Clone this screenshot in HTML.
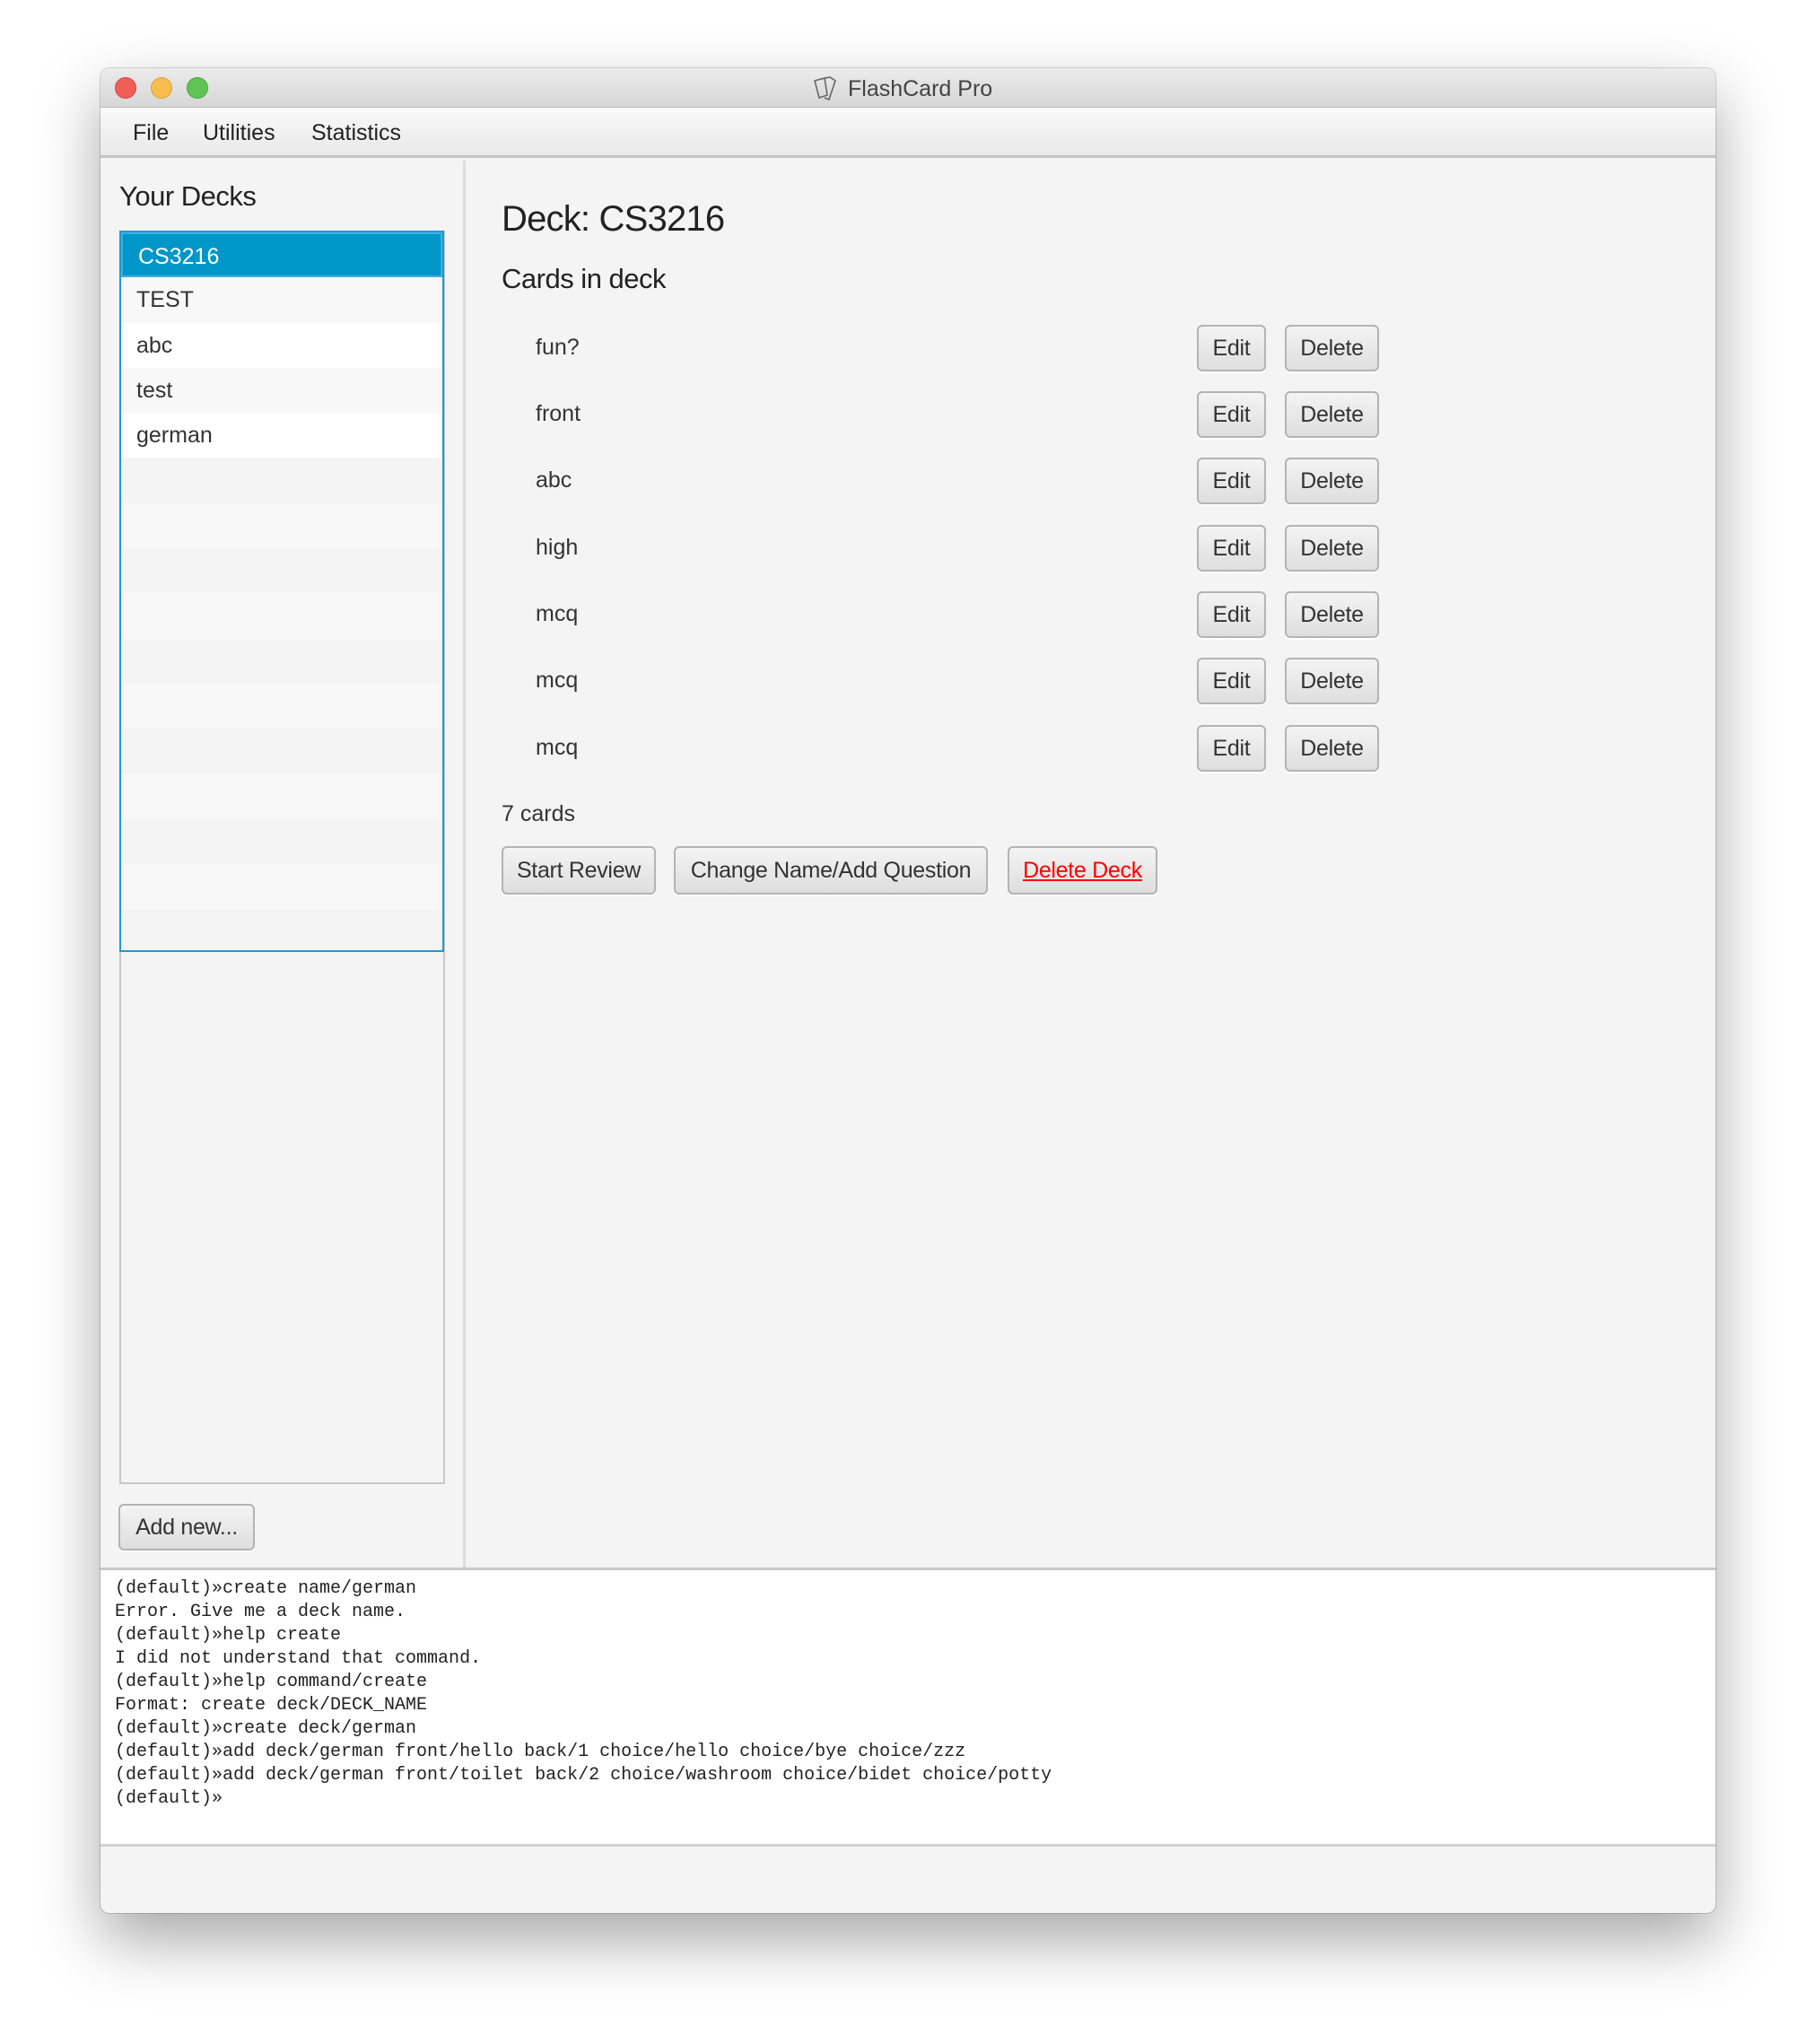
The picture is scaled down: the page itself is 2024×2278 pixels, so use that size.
<!DOCTYPE html>
<html><head><meta charset="utf-8"><style>
*{box-sizing:border-box;margin:0;padding:0}
body{width:2024px;height:2278px;background:#fff;position:relative;overflow:hidden;font-family:"Liberation Sans",sans-serif;color:#333}
.a{position:absolute}
.win{left:112px;top:76px;width:1800px;height:2056px;background:#f4f4f4;border-radius:10px;box-shadow:0 30px 70px rgba(0,0,0,.35),0 0 0 1px rgba(0,0,0,.15);overflow:hidden}
.title{left:0;top:0;width:100%;height:44px;background:linear-gradient(#ececec,#d6d6d6);border-bottom:1px solid #b8b8b8}
.dot{width:24px;height:24px;border-radius:50%;top:10px}
.menu{left:0;top:44px;width:100%;height:56px;background:linear-gradient(#f9f9f9,#e9e9e9);border-bottom:3px solid #c4c4c4}
.menu span{position:absolute;top:14px;font-size:25px;color:#222}
.btn{position:absolute;border:2px solid #b4b4b4;border-radius:6px;background:linear-gradient(#f4f4f4,#dedede);font-size:25px;color:#333;text-align:center;box-shadow:0 2px 0 #fff;letter-spacing:-0.3px}
.row{position:absolute;left:0;width:100%;height:50.3px;font-size:25px;line-height:50px;padding-left:17px}
.card{position:absolute;left:485px;font-size:25px}
.con{font-family:"Liberation Mono",monospace;font-size:20px;line-height:26px;white-space:pre;color:#222}
</style></head><body>
<div class="a win">
 <div class="a title">
  <div class="a dot" style="left:16px;background:#ee5f57;border:1px solid #d8463f"></div>
  <div class="a dot" style="left:56px;background:#f6be4f;border:1px solid #dda43a"></div>
  <div class="a dot" style="left:96px;background:#5fc454;border:1px solid #49a83e"></div>
  <svg class="a" style="left:793px;top:8px" width="30" height="30" viewBox="0 0 30 30"><g fill="none" stroke="#666" stroke-width="1.6"><path d="M3 6 L14 3 L17 22 L8 25 Z"/><path d="M10 4 L20 2 L26 6 L19 27 L14 25"/></g></svg>
  <div class="a" style="left:833px;top:9px;font-size:25px;color:#444">FlashCard Pro</div>
 </div>
 <div class="a menu"><span style="left:36px">File</span><span style="left:114px">Utilities</span><span style="left:235px">Statistics</span></div>
 <div class="a" style="left:404px;top:103px;width:3px;height:1570px;background:#dcdcdc"></div>
 <div class="a" style="left:21px;top:125px;font-size:31px;color:#222;letter-spacing:-0.5px">Your Decks</div>
 <div class="a" style="left:21px;top:181px;width:363px;height:1397px;border:2px solid #c8c8c8;background:#f4f4f4"></div>
 <div class="a" style="left:21px;top:181px;width:362px;height:804px;border:2px solid #1a9bd7;background:#f8f8f8;overflow:hidden">
  <div class="row" style="top:0;background:#0096c9;color:#fff;border:2px solid #3eb0dd">CS3216</div>
  <div class="row" style="top:50.3px;background:#f8f8f8">TEST</div>
  <div class="row" style="top:100.6px;background:#fff">abc</div>
  <div class="row" style="top:150.9px;background:#f8f8f8">test</div>
  <div class="row" style="top:201.2px;background:#fff">german</div>
  <div class="row" style="top:251.5px;background:#f4f4f4"></div>
  <div class="row" style="top:352.1px;background:#f4f4f4"></div>
  <div class="row" style="top:452.7px;background:#f4f4f4"></div>
  <div class="row" style="top:553.3px;background:#f4f4f4"></div>
  <div class="row" style="top:653.9px;background:#f4f4f4"></div>
  <div class="row" style="top:754.5px;background:#f4f4f4"></div>
 </div>
 <div class="btn" style="left:20px;top:1600px;width:152px;height:52px;line-height:48px">Add new...</div>
 <div class="a" style="left:447px;top:146px;font-size:40px;color:#222;letter-spacing:-0.8px">Deck: CS3216</div>
 <div class="a" style="left:447px;top:217px;font-size:31px;color:#222;letter-spacing:-0.5px">Cards in deck</div>
 <div class="card" style="top:297px">fun?</div>
 <div class="card" style="top:371px">front</div>
 <div class="card" style="top:445px">abc</div>
 <div class="card" style="top:520px">high</div>
 <div class="card" style="top:594px">mcq</div>
 <div class="card" style="top:668px">mcq</div>
 <div class="card" style="top:743px">mcq</div>
 <div class="btn" style="left:1222px;top:286px;width:77px;height:52px;line-height:48px">Edit</div><div class="btn" style="left:1320px;top:286px;width:105px;height:52px;line-height:48px">Delete</div>
 <div class="btn" style="left:1222px;top:360px;width:77px;height:52px;line-height:48px">Edit</div><div class="btn" style="left:1320px;top:360px;width:105px;height:52px;line-height:48px">Delete</div>
 <div class="btn" style="left:1222px;top:434px;width:77px;height:52px;line-height:48px">Edit</div><div class="btn" style="left:1320px;top:434px;width:105px;height:52px;line-height:48px">Delete</div>
 <div class="btn" style="left:1222px;top:509px;width:77px;height:52px;line-height:48px">Edit</div><div class="btn" style="left:1320px;top:509px;width:105px;height:52px;line-height:48px">Delete</div>
 <div class="btn" style="left:1222px;top:583px;width:77px;height:52px;line-height:48px">Edit</div><div class="btn" style="left:1320px;top:583px;width:105px;height:52px;line-height:48px">Delete</div>
 <div class="btn" style="left:1222px;top:657px;width:77px;height:52px;line-height:48px">Edit</div><div class="btn" style="left:1320px;top:657px;width:105px;height:52px;line-height:48px">Delete</div>
 <div class="btn" style="left:1222px;top:732px;width:77px;height:52px;line-height:48px">Edit</div><div class="btn" style="left:1320px;top:732px;width:105px;height:52px;line-height:48px">Delete</div>
 <div class="a" style="left:447px;top:817px;font-size:25px">7 cards</div>
 <div class="btn" style="left:447px;top:867px;width:172px;height:54px;line-height:50px">Start Review</div>
 <div class="btn" style="left:639px;top:867px;width:350px;height:54px;line-height:50px">Change Name/Add Question</div>
 <div class="btn" style="left:1011px;top:867px;width:167px;height:54px;line-height:50px;color:#f00;text-decoration:underline">Delete Deck</div>
 <div class="a" style="left:0;top:1671px;width:100%;height:311px;background:#fff;border-top:3px solid #c8c8c8;border-bottom:3px solid #d0d0d0"></div>
 <div class="a con" style="left:16px;top:1682px">(default)»create name/german
Error. Give me a deck name.
(default)»help create
I did not understand that command.
(default)»help command/create
Format: create deck/DECK_NAME
(default)»create deck/german
(default)»add deck/german front/hello back/1 choice/hello choice/bye choice/zzz
(default)»add deck/german front/toilet back/2 choice/washroom choice/bidet choice/potty
(default)»</div>
</div>
</body></html>
